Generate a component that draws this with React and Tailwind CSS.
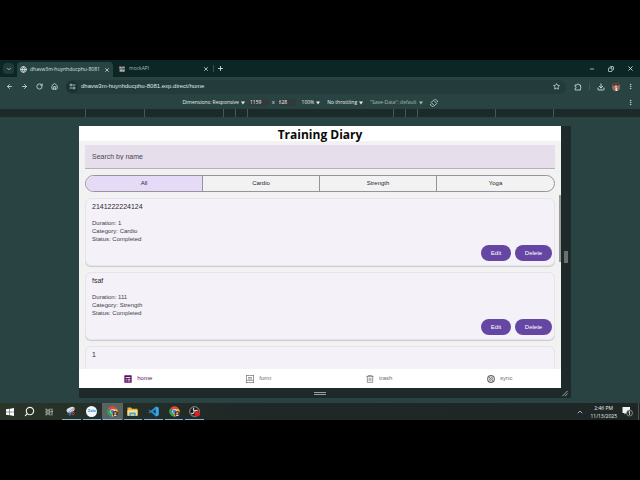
import React, { useState } from "react";
import {
  ArrowLeft, ArrowRight, RotateCw, House, Star, Download, EllipsisVertical,
  X, Plus, Minus, Copy, ChevronDown, ChevronUp, Globe, Search,
} from "lucide-react";

function IconButton({ label, className = "", children }) {
  return (
    <button type="button" aria-label={label} className={"flex shrink-0 items-center justify-center " + className}>
      {children}
    </button>
  );
}

function TabStrip() {
  return (
    <div className="flex h-[17px] shrink-0 items-center bg-[#0b2625] text-[#d5e2e0]">
      <IconButton label="Search tabs" className="ml-[3px] h-[11px] w-[11px] rounded bg-[#203a39]">
        <ChevronDown size={6} strokeWidth={3} />
      </IconButton>
      <div className="ml-[3px] flex h-[15px] w-[96px] items-center self-end rounded-t bg-[#294342] px-[3px]">
        <Globe size={7} strokeWidth={3} className="shrink-0" />
        <span className="ml-[3px] w-[74px] font-['Open_Sans','Noto_Sans',sans-serif] text-[5px] whitespace-nowrap">dhavw3m-huynhducphu-8081</span>
        <IconButton label="Close tab"><X size={6} strokeWidth={3} /></IconButton>
      </div>
      <div className="flex w-[100px] items-center pl-[6px]">
        <svg viewBox="0 0 12 12" className="h-[6px] w-[6px] shrink-0">
          <rect width="12" height="12" fill="#4a5452" />
          <path d="M1 2h4v3H1zM7 2h4v2H7zM2 8l3-2 2 3 4-3v5H2z" fill="#b4b9b7" />
          <path d="M6 4h2v3H6z" fill="#b4655c" />
        </svg>
        <span className="ml-[4px] grow font-['Open_Sans','Noto_Sans',sans-serif] text-[5px] text-[#a9bbb9]">mockAPI</span>
        <IconButton label="Close tab" className="mr-[4px]"><X size={6} strokeWidth={3} /></IconButton>
      </div>
      <div className="h-[7px] border-l border-[#36504f]" />
      <IconButton label="New tab" className="ml-[3px]"><Plus size={7} strokeWidth={3} /></IconButton>
      <div className="ml-auto flex items-center gap-[13px] pr-[6px]">
        <IconButton label="Minimize"><Minus size={6} strokeWidth={3} /></IconButton>
        <IconButton label="Restore"><Copy size={6} strokeWidth={3} className="-scale-x-100" /></IconButton>
        <IconButton label="Close window"><X size={7} strokeWidth={3} /></IconButton>
      </div>
    </div>
  );
}

function Toolbar() {
  return (
    <div className="flex h-[19px] shrink-0 items-center bg-[#294342] text-[#c5d4d2]">
      <div className="flex items-center gap-[8px] pl-[6px]">
        <IconButton label="Back"><ArrowLeft size={7} strokeWidth={3} /></IconButton>
        <IconButton label="Forward"><ArrowRight size={7} strokeWidth={3} /></IconButton>
        <IconButton label="Reload"><RotateCw size={7} strokeWidth={3} /></IconButton>
        <IconButton label="Home"><House size={7} strokeWidth={3} /></IconButton>
      </div>
      <div className="ml-[8px] flex h-[14px] grow items-center rounded-full bg-[#243b3b] pr-[6px]">
        <IconButton label="Site information" className="h-[12px] w-[12px] rounded-full bg-[#1c3231]">
          <svg viewBox="0 0 14 14" className="h-[7px] w-[7px]" fill="none" stroke="currentColor" strokeWidth="1.600">
            <circle cx="4" cy="4" r="2" />
            <circle cx="10" cy="10" r="2" />
            <path d="M7 4h6M1 10h6" />
          </svg>
        </IconButton>
        <input
          aria-label="Address"
          defaultValue="dhavw3m-huynhducphu-8081.exp.direct/home"
          className="ml-[3px] min-w-0 grow bg-transparent text-[6px] text-[#dde8e6] outline-none"
        />
        <IconButton label="Bookmark"><Star size={7} strokeWidth={3} /></IconButton>
      </div>
      <div className="flex items-center gap-[7px] pr-[6px] pl-[8px]">
        <IconButton label="Extensions">
          <svg viewBox="0 0 16 16" className="h-[8px] w-[8px]" fill="none" stroke="currentColor" strokeWidth="1.800">
            <path d="M2 4h4a2 2 0 0 1 4 0h3v4a2 2 0 0 1 0 3v3H2v-3a2 2 0 0 0 0-4z" />
          </svg>
        </IconButton>
        <div className="h-[7px] border-l border-[#3e5756]" />
        <IconButton label="Downloads"><Download size={8} strokeWidth={3} /></IconButton>
        <IconButton label="Profile">
          <svg viewBox="0 0 16 16" className="h-[8px] w-[8px]">
            <circle cx="8" cy="8" r="8" fill="#9a6a56" />
            <path d="M2 3a8 8 0 0 1 12 0L11 7H4z" fill="#4a352d" />
            <circle cx="8" cy="7" r="3" fill="#d9a791" />
            <path d="M7 10h3l1 6H7z" fill="#eee4df" />
          </svg>
        </IconButton>
        <IconButton label="Menu"><EllipsisVertical size={7} strokeWidth={3} /></IconButton>
      </div>
    </div>
  );
}

function Drop({ label, dim = false }) {
  return (
    <button type="button" className={"flex items-center gap-[2px] whitespace-nowrap " + (dim ? "text-[#a9b9b7]" : "text-[#e6f0ee]")}>
      {label}
      <svg viewBox="0 0 8 8" className="h-[4px] w-[4px]"><path d="M0 1h8L4 7z" fill="currentColor" /></svg>
    </button>
  );
}

function DeviceBar() {
  return (
    <div className="flex h-[13px] shrink-0 items-center bg-[#294342] font-['Open_Sans','Noto_Sans',sans-serif] text-[5px]">
      <div className="flex grow items-center justify-center text-[#eef5f4]">
        <Drop label="Dimensions: Responsive" />
        <input aria-label="Width" defaultValue="1159" className="ml-[4px] w-[20px] rounded-xs bg-[#303c3c] px-px outline-none" />
        <span className="mx-[3px]">x</span>
        <input aria-label="Height" defaultValue="628" className="mr-[6px] w-[18px] rounded-xs bg-[#303c3c] px-px outline-none" />
        <div className="flex gap-[7px]">
          <Drop label="100%" />
          <Drop label="No throttling" />
          <Drop label={'"Save-Data": default'} dim />
          <IconButton label="Rotate">
            <svg viewBox="0 0 24 24" className="h-[8px] w-[8px]" fill="none" stroke="#c5d4d2" strokeWidth="2.500">
              <rect x="7" y="5" width="10" height="14" rx="1" transform="rotate(-45 12 12)" />
              <path d="M13 1c5 0 9 3 10 8M11 23c-5 0-9-3-10-8" />
            </svg>
          </IconButton>
        </div>
      </div>
      <IconButton label="More options" className="w-[20px] text-[#c5d4d2]"><EllipsisVertical size={7} strokeWidth={3} /></IconButton>
    </div>
  );
}

function Ruler() {
  return (
    <div className="flex h-[8px] shrink-0 justify-center bg-[#1d2a2a] pr-[2px] *:border-l *:border-[#485857]">
      <div className="w-[59px]" />
      <div className="w-[79px]" />
      <div className="w-[12px]" />
      <div className="w-[12px]" />
      <div className="w-[146px]" />
      <div className="w-[12px]" />
      <div className="w-[12px]" />
      <div className="w-[78px]" />
      <div className="w-[59px] border-r" />
    </div>
  );
}

const categories = ["All", "Cardio", "Strength", "Yoga"];
const trainings = [
  { name: "2141222224124", duration: "1", category: "Cardio" },
  { name: "fsaf", duration: "111", category: "Strength" },
  { name: "1" },
];

function TrainingCard({ item }) {
  const action = "h-[16px] rounded-full bg-[#6547a3] text-[6px] text-white";
  return (
    <article className="flex h-[68px] shrink-0 flex-col rounded-md border border-[#e6e4e9] bg-[#f4f1f8] px-[6px] shadow-[0_1px_1px_#c8cace]">
      <h2 className="mt-[3px] text-[7px] leading-[9px] text-[#2a292d]">{item.name}</h2>
      {item.category && (
        <>
          <div className="mt-[8px] text-[6px] leading-[8px] text-[#403e45]">
            <p>Duration: {item.duration}</p>
            <p>Category: {item.category}</p>
            <p>Status: Completed</p>
          </div>
          <div className="-mr-[4px] mt-[2px] flex justify-end gap-[4px]">
            <button type="button" className={"w-[30px] " + action}>Edit</button>
            <button type="button" className={"w-[37px] " + action}>Delete</button>
          </div>
        </>
      )}
    </article>
  );
}

const navItems = [
  {
    label: "home",
    icon: (
      <>
        <rect x="1" y="1" width="22" height="22" rx="1" fill="currentColor" />
        <path d="M5 7.500h14M5 13h3M11 13h8M5 18h3M11 18h8" stroke="#fff" strokeWidth="2.500" />
      </>
    ),
  },
  {
    label: "form",
    icon: (
      <g fill="none" stroke="currentColor" strokeWidth="2">
        <rect x="1" y="1" width="22" height="22" />
        <path d="M6 7.500h12M6 12h12M2 16h20" />
      </g>
    ),
  },
  {
    label: "trash",
    icon: (
      <g fill="none" stroke="currentColor" strokeWidth="2.200">
        <path d="M1 4h22M8 4V1h8v3M4 4v18h16V4M9.500 8v10M14.500 8v10" />
      </g>
    ),
  },
  {
    label: "sync",
    icon: (
      <g fill="none" stroke="currentColor" strokeWidth="3.500">
        <circle cx="12" cy="12" r="10" />
        <path d="M5 5l14 14M8 10v6h5M16 14V8h-5" strokeWidth="2.500" />
      </g>
    ),
  },
];

function DiaryApp() {
  const [active, setActive] = useState("All");
  return (
    <div className="relative flex min-w-0 grow flex-col overflow-hidden bg-[#f2f2f2]">
      <h1 className="h-[15px] shrink-0 bg-white text-center font-['Open_Sans','Noto_Sans',sans-serif] text-[12px] leading-[18px] font-bold text-[#0a0a0a]">Training Diary</h1>
      <div className="flex min-h-0 grow flex-col overflow-hidden px-[6px] pt-[4px]">
        <input
          aria-label="Search by name"
          placeholder="Search by name"
          className="h-[24px] shrink-0 border-b border-[#b4afb8] bg-[#e6deeb] px-[7px] text-[7px] outline-none placeholder:text-[#4c4852]"
        />
        <div className="mt-[6px] grid h-[17px] shrink-0 grid-cols-4 divide-x divide-[#96939c] overflow-hidden rounded-full border border-[#96939c]">
          {categories.map((c) => (
            <button
              key={c}
              type="button"
              aria-pressed={c === active}
              onClick={() => setActive(c)}
              className={"text-[6px] text-[#29272d] " + (c === active ? "bg-[#e6dbf6]" : "")}
            >
              {c}
            </button>
          ))}
        </div>
        <div className="mt-[6px] flex min-h-0 grow flex-col gap-[6px] overflow-hidden">
          {trainings.map((t) => <TrainingCard key={t.name} item={t} />)}
        </div>
      </div>
      <nav className="grid h-[19px] shrink-0 grid-cols-4 bg-white">
        {navItems.map((n, i) => (
          <a
            key={n.label}
            href={"#" + n.label}
            className={"flex items-center justify-center gap-[5px] pr-[2px] text-[6px] " + (i === 0 ? "text-[#5c0e66]" : "text-[#6c6c6e]")}
          >
            <svg viewBox="0 0 24 24" className="h-[8px] w-[8px]">{n.icon}</svg>
            {n.label}
          </a>
        ))}
      </nav>
      <div className="absolute top-[69px] right-0 h-[67px] w-[2px] bg-[#97999a]" />
    </div>
  );
}

function Viewport() {
  return (
    <main className="flex min-h-0 grow flex-col bg-[#294342] pt-[9px] pr-[69px] pb-[5px] pl-[79px]">
      <div className="flex min-h-0 grow">
        <DiaryApp />
        <div className="flex w-[10px] shrink-0 items-center justify-center bg-[#1e2929]">
          <div className="h-[12px] w-[4px] bg-[#69706f]" />
        </div>
      </div>
      <div className="flex h-[10px] shrink-0 items-center bg-[#1e2929]">
        <div className="flex grow justify-center">
          <div className="h-[3px] w-[12px] border-y border-[#9aa3a1]" />
        </div>
        <svg viewBox="0 0 8 8" className="mr-[2px] h-[7px] w-[8px]" stroke="#b2b9b8" fill="none">
          <path d="M1 7l6-6M4 7l3-3" />
        </svg>
      </div>
    </main>
  );
}

function ChromeIcon() {
  return (
    <svg viewBox="0 0 24 24" className="h-[11px] w-[11px]">
      <path d="M12 12L2 7a11 11 0 0 1 20 0z" fill="#e04a3c" />
      <path d="M12 12l-2 10.800A11 11 0 0 1 2 6z" fill="#33a256" />
      <path d="M12 12V7h10a11 11 0 0 1-12 15.800z" fill="#f4c331" />
      <circle cx="12" cy="12" r="5" fill="#fff" />
      <circle cx="12" cy="12" r="4" fill="#4181e8" />
      <circle cx="18" cy="17" r="6" fill="#4d352d" />
      <circle cx="18" cy="16" r="2.500" fill="#d5a18c" />
      <path d="M15 22l1-3h4l1 3z" fill="#e8e0dc" />
    </svg>
  );
}

const taskIcons = [
  {
    name: "Snipping Tool",
    icon: (
      <svg viewBox="0 0 24 24" className="h-[10px] w-[10px]">
        <ellipse cx="11" cy="9" rx="10" ry="6" fill="#d8dfe6" transform="rotate(-20 11 9)" />
        <path d="M3 17L20 4M8 20L18 8" stroke="#8da1b2" strokeWidth="2" />
        <circle cx="17" cy="18" r="3" fill="none" stroke="#d24a45" strokeWidth="2" />
        <circle cx="9" cy="20" r="2.500" fill="none" stroke="#4a82c9" strokeWidth="2" />
      </svg>
    ),
  },
  {
    name: "Zalo",
    icon: (
      <span className="flex h-[11px] w-[11px] items-center justify-center rounded-full bg-[#f2f8fd] text-[4px] font-bold text-[#2583d8]">Zalo</span>
    ),
  },
  { name: "Chrome", icon: <ChromeIcon />, current: true },
  {
    name: "File Explorer",
    icon: (
      <svg viewBox="0 0 24 24" className="h-[11px] w-[11px]">
        <path d="M1 3h8l2 3h12v15H1z" fill="#e4b443" />
        <path d="M1 9h22v12H1z" fill="#fae08b" />
        <path d="M5 21v-7h14v7h-4v-3H9v3z" fill="#4aa3dc" />
      </svg>
    ),
  },
  {
    name: "Visual Studio Code",
    icon: (
      <svg viewBox="0 0 24 24" className="h-[11px] w-[11px]">
        <path d="M17 1l6 3v16l-6 3L6.500 13.500 3 16l-2-1 3.500-3L1 9l2-1 3.500 2.500zM17 7l-6 5 6 5z" fill="#2490d6" fillRule="evenodd" />
        <path d="M17 1l6 3v16l-6 3z" fill="#35a8ee" />
      </svg>
    ),
  },
  { name: "Chrome profile", icon: <ChromeIcon /> },
  {
    name: "OBS Studio",
    icon: (
      <svg viewBox="0 0 24 24" className="h-[11px] w-[11px]">
        <circle cx="12" cy="12" r="10.500" fill="#1b1b1d" stroke="#cfcfcf" strokeWidth="1.500" />
        <path d="M11 4a4 4 0 0 0 2 7M5 16a4 4 0 0 0 6-4M19 10a4 4 0 0 0-6 2" fill="none" stroke="#d9d9d9" strokeWidth="2.500" />
        <circle cx="18" cy="17" r="6" fill="#e11d22" />
      </svg>
    ),
  },
];

function Taskbar() {
  return (
    <footer className="flex h-[17px] shrink-0 items-center bg-linear-to-r from-[#2a3427] via-[#1f2727] via-40% to-[#1e2626] text-[#eef1f0]">
      <div className="flex w-[61px] items-center gap-[10px] pl-[6px]">
        <IconButton label="Start">
          <svg viewBox="0 0 16 16" className="h-[8px] w-[8px]" fill="#fff">
            <path d="M0 2.500l7-1v6H0zM8 1.300L16 0v7.500H8zM0 8.500h7v6l-7-1zM8 8.500h8V16l-8-1.300z" />
          </svg>
        </IconButton>
        <IconButton label="Search"><Search size={11} strokeWidth={2.5} className="-scale-x-100" /></IconButton>
        <IconButton label="Task view">
          <svg viewBox="0 0 18 16" className="h-[8px] w-[9px]" fill="none" stroke="#c3c9c7" strokeWidth="1.600">
            <path d="M2 1v3h8V1M2 15v-3h8v3M2 6h8v4H2zM14 1v14M13 7h3" />
          </svg>
        </IconButton>
      </div>
      <div className="grid h-full w-[144px] grid-cols-7">
        {taskIcons.map((t) => (
          <button
            key={t.name}
            type="button"
            aria-label={t.name}
            className={"flex flex-col items-center px-px " + (t.current ? "bg-[#5a6361]" : "")}
          >
            <span className="flex grow items-center">{t.icon}</span>
            <span className="h-px w-full bg-[#7db4dd]" />
          </button>
        ))}
      </div>
      <div className="ml-auto flex items-center">
        <IconButton label="Show hidden icons"><ChevronUp size={8} strokeWidth={2} /></IconButton>
        <div className="ml-[6px] text-right font-['Open_Sans','Noto_Sans',sans-serif] text-[5px] leading-[8px]">
          <p className="pr-[4px]">2:46 PM</p>
          <p>11/13/2025</p>
        </div>
        <IconButton label="Notifications" className="mx-[5px]">
          <svg viewBox="0 0 22 22" className="h-[11px] w-[11px]">
            <path d="M1 2h15v12H8l-3 3v-3H1z" fill="#f1f3f2" />
            <circle cx="15" cy="14" r="6" fill="#242c2c" stroke="#b9bfbe" strokeWidth="1.200" />
            <path d="M13 12l2-1.500V18" fill="none" stroke="#fff" strokeWidth="1.500" />
          </svg>
        </IconButton>
        <div className="mr-px h-[17px] border-l border-[#4a5251]" />
      </div>
    </footer>
  );
}

export default function App() {
  return (
    <div className="flex h-screen flex-col overflow-hidden bg-black py-[60px] font-['Liberation_Sans',Roboto,sans-serif]">
      <TabStrip />
      <Toolbar />
      <DeviceBar />
      <Ruler />
      <Viewport />
      <Taskbar />
    </div>
  );
}
